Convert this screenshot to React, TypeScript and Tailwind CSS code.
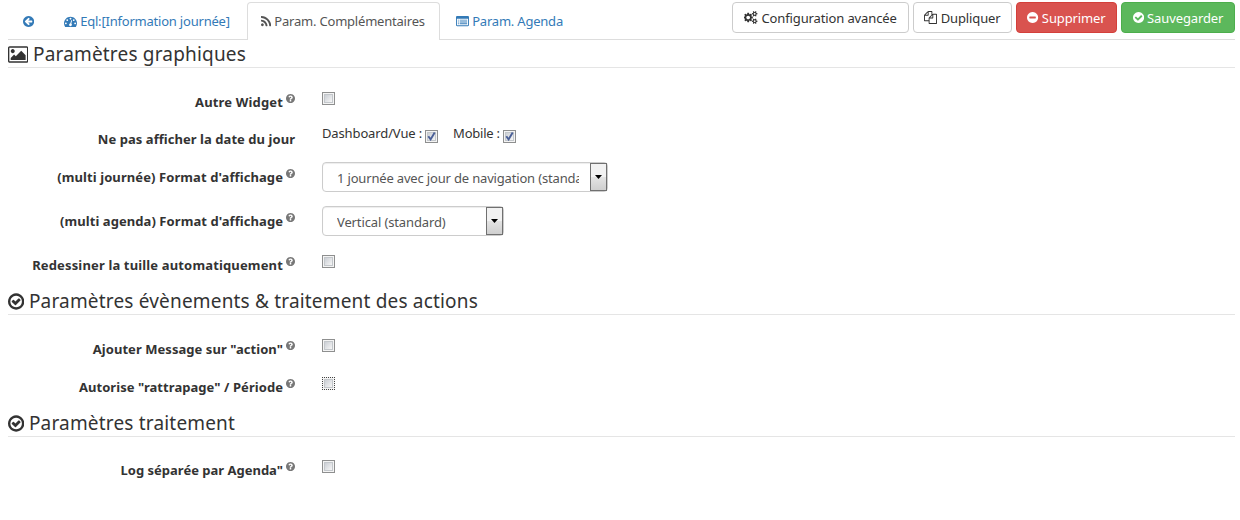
import React from 'react';

const DISC =
  'q0 209-103 385.5t-279.5 279.5-385.5 103-385.5-103-279.5-279.5-103-385.5 103-385.5 279.5-279.5 385.5-103 385.5 103 279.5 279.5 103 385.5z';
const DOT = 'q0-53-37.5-90.5t-90.5-37.5-90.5 37.5-37.5 90.5 37.5 90.5 90.5 37.5 90.5-37.5 37.5-90.5z';
const SMALL_COG =
  'v140q0 16-149 31-12 27-30 52 51 113 51 138 0 4-4 7-122 71-124 71-8 0-46-47t-52-68q-20 2-30 2t-30-2q-14 21-52 68t-46 47q-2 0-124-71-4-3-4-7 0-25 51-138-18-25-30-52-149-15-149-31v-140q0-16 149-31 13-29 30-52-51-113-51-138 0-4 4-7 4-2 35-20t59-34 30-16q8 0 46 46.5t52 67.5q20-2 30-2t30 2q51-71 92-112l6-2q4 0 124 70 4 3 4 7 0 25-51 138 17 23 30 52 149 15 149 31z';

const ICONS = {
  back: {
    box: '128 0 1536 1792',
    d: 'M1408 960v-128q0-26-19-45t-45-19h-502l189-189q19-19 19-45t-19-45l-91-91q-18-18-45-18t-45 18l-362 362-91 91q-18 18-18 45t18 45l91 91 362 362q18 18 45 18t45-18l91-91q18-18 18-45t-18-45l-189-189h502q26 0 45-19t19-45zM1664 896' + DISC,
  },
  gauge: {
    box: '0 0 1792 1792',
    d:
      'M384 1152' + DOT + 'M576 704' + DOT +
      'M1004 1185l101-382q6-26-7.5-48.5t-38.5-29.5-48 6.5-30 39.5l-101 382q-60 5-107 43.5t-63 98.5q-20 77 20 146t117 89 146-20 89-117q16-60-6-117t-72-91z' +
      'M1664 1152' + DOT + 'M1024 512' + DOT + 'M1472 704' + DOT +
      'M1792 1152q0 261-141 483-19 29-54 29h-1402q-35 0-54-29-141-221-141-483 0-182 71-348t191-286 286-191 348-71 348 71 286 191 191 286 71 348z',
  },
  rss: {
    box: '192 0 1408 1792',
    d: 'M576 1344q0 80-56 136t-136 56-136-56-56-136 56-136 136-56 136 56 56 136zm512 123q2 28-17 48-18 21-47 21h-135q-25 0-43-16.5t-20-41.5q-22-229-184.5-391.5t-391.5-184.5q-25-2-41.5-20t-16.5-43v-135q0-29 21-47 17-17 43-17h5q160 13 306 80.5t259 181.5q114 113 181.5 259t80.5 306zm512 2q2 27-18 47-18 20-46 20h-143q-26 0-44.5-17.5t-19.5-42.5q-12-215-101-408.5t-231.5-336-336-231.5-408.5-102q-25-1-42.5-19.5t-17.5-43.5v-143q0-28 20-46 18-18 44-18h3q262 13 501.5 120t425.5 294q187 186 294 425.5t120 501.5z',
  },
  list: {
    box: '0 0 1792 1792',
    d: 'M160 128h1472q66 0 113 47t47 113v1088q0 66-47 113t-113 47h-1472q-66 0-113-47t-47-113v-1088q0-66 47-113t113-47zM128 512v864q0 32 32 32h1472q32 0 32-32v-864zM256 640h128v128h-128zM512 640h1024v128h-1024zM256 896h128v128h-128zM512 896h1024v128h-1024zM256 1152h128v128h-128zM512 1152h1024v128h-1024z',
  },
  cogs: {
    box: '0 0 1920 1792',
    d:
      'M832 896q0-106-75-181t-181-75-181 75-75 181 75 181 181 75 181-75 75-181zm768 512q0-52-38-90t-90-38-90 38-38 90q0 53 37.5 90.5t90.5 37.5 90.5-37.5 37.5-90.5zm0-1024q0-52-38-90t-90-38-90 38-38 90q0 53 37.5 90.5t90.5 37.5 90.5-37.5 37.5-90.5z' +
      'M1216 805v185q0 10-7 19.5t-16 10.5l-155 24q-11 35-32 76 34 48 90 115 7 11 7 20 0 12-7 19-23 30-82.5 89.5t-78.5 59.5q-11 0-21-7l-115-90q-37 19-77 31-11 108-23 155-7 24-30 24h-186q-11 0-20-7.5t-10-17.5l-23-153q-34-10-75-31l-118 89q-7 7-20 7-11 0-21-8-144-133-144-160 0-9 7-19 10-14 41-53t47-61q-23-44-35-82l-152-24q-10-1-17-9.5t-7-19.5v-185q0-10 7-19.5t16-10.5l155-24q11-35 32-76-34-48-90-115-7-11-7-20 0-12 7-20 22-30 82-89t79-59q11 0 21 7l115 90q34-18 77-32 11-108 23-154 7-24 30-24h186q11 0 20 7.5t10 17.5l23 153q34 10 75 31l118-89q8-7 20-7 11 0 21 8 144 133 144 160 0 8-7 19-12 16-42 54t-45 60q23 48 34 82l152 23q10 2 17 10.5t7 19.5z' +
      'M1856 1338' + SMALL_COG + 'M1856 314' + SMALL_COG,
  },
  copy: {
    box: '0 0 1792 1792',
    d: 'M1696 384q40 0 68 28t28 68v1216q0 40-28 68t-68 28h-960q-40 0-68-28t-28-68v-288h-544q-40 0-68-28t-28-68v-672q0-40 20-88t48-76l408-408q28-28 76-48t88-20h416q40 0 68 28t28 68v328q68-40 128-40h416zm-544 213l-299 299h299v-299zm-640-384l-299 299h299v-299zm196 647l316-316v-416h-384v416q0 40-28 68t-68 28h-416v640h512v-256q0-40 20-88t48-76zm956 804v-1152h-384v416q0 40-28 68t-68 28h-416v640h896z',
  },
  minus: {
    box: '128 0 1536 1792',
    d: 'M1344 960v-128q0-26-19-45t-45-19h-768q-26 0-45 19t-19 45v128q0 26 19 45t45 19h768q26 0 45-19t19-45zM1664 896' + DISC,
  },
  check: {
    box: '128 0 1536 1792',
    d: 'M1412 734q0-28-18-46l-91-90q-19-19-45-19t-45 19l-408 407-226-226q-19-19-45-19t-45 19l-91 90q-18 18-18 46 0 27 18 45l362 362q19 19 45 19 27 0 46-19l543-543q18-18 18-45zM1664 896' + DISC,
  },
  checkRing: {
    box: '128 0 1536 1792',
    d: 'M1299 813l-422 422q-19 19-45 19t-45-19l-294-294q-19-19-19-45t19-45l102-102q19-19 45-19t45 19l147 147 275-275q19-19 45-19t45 19l102 102q19 19 19 45t-19 45zm141 83q0-148-73-273t-198-198-273-73-273 73-198 198-73 273 73 273 198 198 273 73 273-73 198-198 73-273zM1664 896' + DISC,
  },
  help: {
    box: '128 128 1536 1536',
    d: 'M1024 1376v-192q0-14-9-23t-23-9h-192q-14 0-23 9t-9 23v192q0 14 9 23t23 9h192q14 0 23-9t9-23zm256-672q0-88-55.5-163t-138.5-116-170-41q-243 0-371 213-15 24 8 42l132 100q7 6 19 6 16 0 25-12 53-68 86-92 34-24 86-24 48 0 85.5 26t37.5 59q0 38-20 61t-68 45q-63 28-115.5 86.5t-52.5 125.5v36q0 14 9 23t23 9h192q14 0 23-9t9-23q0-19 21.5-49.5t54.5-49.5q32-18 49-28.5t46-35 44.5-48 28-60.5 12.5-81zM1664 896' + DISC,
  },
  picture: {
    box: '-64 0 1920 1792',
    d: 'M576 576q0 80-56 136t-136 56-136-56-56-136 56-136 136-56 136 56 56 136zm1024 384v448h-1408v-192l320-320 160 160 512-512zm96-704h-1600q-13 0-22.5 9.5t-9.5 22.5v1216q0 13 9.5 22.5t22.5 9.5h1600q13 0 22.5-9.5t9.5-22.5v-1216q0-13-9.5-22.5t-22.5-9.5zm160 32v1216q0 66-47 113t-113 47h-1600q-66 0-113-47t-47-113v-1216q0-66 47-113t113-47h1600q66 0 113 47t47 113z',
  },
};

function Icon({ name, className = 'h-[1em]' }: { name: keyof typeof ICONS; className?: string }) {
  const { box, d } = ICONS[name];
  return (
    <svg viewBox={box} className={`inline-block w-auto shrink-0 align-[-0.143em] ${className}`} fill="currentColor" fillRule="evenodd" aria-hidden="true">
      <path d={d} />
    </svg>
  );
}

function Check({ checked = false, focused = false, className = '' }: { checked?: boolean; focused?: boolean; className?: string }) {
  return (
    <span
      role="checkbox"
      aria-checked={checked}
      className={`flex size-[13px] shrink-0 border bg-[#f4f4f4] p-px ${focused ? 'border-dotted border-[#444]' : 'border-[#8e8f8f]'} ${className}`}
    >
      <span className="flex size-[9px] border border-[#c3c7cb] bg-linear-to-br from-[#cbcfd5] to-[#f6f6f6]">
        {checked && (
          <svg viewBox="0 0 9 9" className="-m-px size-[9px] shrink-0" fill="none" stroke="#4a5f97" strokeWidth="1.9">
            <path d="M1.3 4.2 3.6 7.4 7.7 0.6" />
          </svg>
        )}
      </span>
    </span>
  );
}

type RowProps = { label: string; help?: boolean; className?: string; labelClass?: string; children: React.ReactNode };

function Row({ label, help = true, className = '', labelClass = 'pt-[7px]', children }: RowProps) {
  return (
    <div className={`flex items-start ${className}`}>
      <div className={`flex w-[295px] justify-end font-bold leading-[19px] whitespace-nowrap ${labelClass}`}>
        <span>{label}</span>
        {help && <Icon name="help" className="mt-px ml-[3px] size-[9px] text-[#777]" />}
      </div>
      <div className="ml-[27px] flex">{children}</div>
    </div>
  );
}

function Heading({ icon, children }: { icon: keyof typeof ICONS; children: string }) {
  return (
    <h2 className="mr-[5px] ml-2 h-7 border-b border-[#e5e5e5] text-[19px] leading-[28px] tracking-[0.18px] whitespace-nowrap">
      <Icon name={icon} className="mr-[-0.5px] h-[1em]" /> {children}
    </h2>
  );
}

function Select({ children, className }: { children: string; className: string }) {
  return (
    <div className={`flex h-[30px] justify-between rounded-[4px] border border-[#ccc] text-[#555] shadow-[inset_0_1px_1px_rgba(0,0,0,0.075)] ${className}`}>
      <span className="ml-[14px] flex-1 overflow-hidden leading-[30px] whitespace-nowrap">{children}</span>
      <span className="ml-[11px] flex h-7 w-[17px] items-center justify-center border border-[#707070] bg-linear-to-b from-[#f2f2f2] from-50% via-[#e4e4e4] via-50% to-[#cfcfcf]">
        <svg viewBox="0 0 7 4" className="h-1 w-[7px]" fill="#000"><path d="M0 0h7L3.5 4z" /></svg>
      </span>
    </div>
  );
}

export default function App() {
  return (
    <main className="h-[520px] w-[1240px] overflow-hidden bg-white font-['Noto_Sans','Open_Sans',sans-serif] text-[13px] text-[#333]">
      <header className="mr-[5px] ml-2 flex h-10 items-start border-b border-[#ddd] leading-[19px] tracking-[-0.21px] whitespace-nowrap">
        <nav className="flex h-10 pt-[2px] text-[#337ab7]">
          <a className="w-[41px] pt-[10px] pl-[15px]"><Icon name="back" /></a>
          <a className="w-[198px] pt-[10px] pl-[15px]"><Icon name="gauge" /> Eql:[Information journée]</a>
          <a className="h-[38px] w-[193px] rounded-t-[4px] border border-b-0 border-[#ddd] bg-white pt-[9px] pl-[13px] text-[#555]"><Icon name="rss" /> Param. Complémentaires</a>
          <a className="pt-[10px] pl-4"><Icon name="list" /> Param. Agenda</a>
        </nav>
        <div className="ml-auto flex gap-1 pt-[2px] tracking-[-0.12px] *:h-[31px] *:rounded-[4px] *:border *:pt-[1px] *:text-center">
          <button className="w-[177px] border-[#ccc]"><Icon name="cogs" /> Configuration avancée</button>
          <button className="w-[99px] border-[#ccc]"><Icon name="copy" /> Dupliquer</button>
          <button className="w-[101px] border-[#d43f3a] bg-[#d9534f] text-white"><Icon name="minus" /> Supprimer</button>
          <button className="w-[114px] border-[#4cae4c] bg-[#5cb85c] text-white"><Icon name="check" /> Sauvegarder</button>
        </div>
      </header>

      <Heading icon="picture">Paramètres graphiques</Heading>
      <section className="h-[219px] pt-[18px]">
        <Row label="Autre Widget" className="h-[37px]" labelClass="pt-[7px] tracking-[0.16px]"><Check className="mt-[6px]" /></Row>
        <Row label="Ne pas afficher la date du jour" help={false} className="h-[39px]" labelClass="pt-[7px] tracking-[0.05px]">
          <span className="leading-[21px] tracking-[-0.13px]">Dashboard/Vue :</span>
          <Check checked className="mt-[7px] ml-[3px]" />
          <span className="ml-[15px] leading-[21px] tracking-[-0.24px]">Mobile :</span>
          <Check checked className="mt-[7px] ml-[3px]" />
        </Row>
        <Row label="(multi journée) Format d'affichage" className="h-11" labelClass="pt-[6px] tracking-[0.09px]">
          <Select className="w-[286px] tracking-[-0.17px]">1 journée avec jour de navigation (standard)</Select>
        </Row>
        <Row label="(multi agenda) Format d'affichage" className="h-[43px]" labelClass="pt-[6px] tracking-[0.07px]">
          <Select className="w-[182px] tracking-[-0.13px]">Vertical (standard)</Select>
        </Row>
        <Row label="Redessiner la tuille automatiquement" labelClass="pt-[7px] tracking-[0.15px]"><Check className="mt-[6px]" /></Row>
      </section>

      <Heading icon="checkRing">Paramètres évènements &amp; traitement des actions</Heading>
      <section className="h-[94px] pt-[18px]">
        <Row label={'Ajouter Message sur "action"'} className="h-[38px]" labelClass="pt-[7px] tracking-[0.05px]"><Check className="mt-[6px]" /></Row>
        <Row label={'Autorise "rattrapage" / Période'} labelClass="pt-[7px] tracking-[0.06px]"><Check focused className="mt-[6px]" /></Row>
      </section>

      <Heading icon="checkRing">Paramètres traitement</Heading>
      <section className="pt-[17px]">
        <Row label={'Log séparée par Agenda"'}><Check className="mt-[6px]" /></Row>
      </section>
    </main>
  );
}
